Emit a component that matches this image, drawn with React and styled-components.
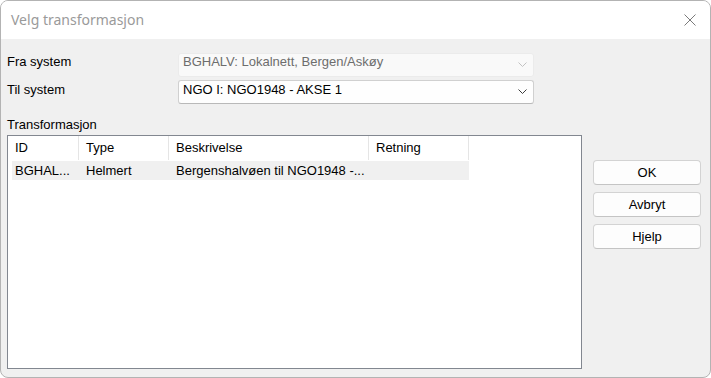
import React from 'react'
import styled, { createGlobalStyle } from 'styled-components'

const Global = createGlobalStyle`
	html, body {
		margin: 0;
		padding: 0;
		background: #ffffff;
	}
	body {
		font-family: "Liberation Sans", Arial, sans-serif;
		font-size: 13px;
		color: #000;
	}
`

const Window = styled.div`
	box-sizing: border-box;
	width: 711px;
	height: 378px;
	border: 1px solid #b3b3b3;
	border-radius: 8px;
	overflow: hidden;
	background: #f0f0f0;
	display: flex;
	flex-direction: column;
`

const TitleBar = styled.div`
	height: 38px;
	flex: none;
	background: #fff;
	display: flex;
	align-items: center;
	justify-content: space-between;
	padding-left: 10px;
`

const Title = styled.span`
	font-family: "Noto Sans", "Open Sans", sans-serif;
	font-size: 14px;
	color: #9a9a9a;
	margin-top: -1px;
`

const CloseButton = styled.div`
	width: 40px;
	height: 38px;
	display: grid;
	place-items: center;
`

const Body = styled.div`
	flex: 1;
	padding: 14px 0 0 6px;
`

const Form = styled.div`
	display: grid;
	grid-template-columns: 171px 356px;
	row-gap: 3px;
	align-items: start;
`

const Label = styled.div`
	line-height: 15px;
	padding-top: ${props => props.offset || 0}px;
	white-space: nowrap;
`

const Combo = styled.div`
	box-sizing: border-box;
	height: 24px;
	border-radius: 3px;
	border: 1px solid ${props => props.disabled ? '#ebebeb' : '#d0d0d0'};
	border-bottom-color: ${props => props.disabled ? '#ebebeb' : '#b9b9b9'};
	background: ${props => props.disabled ? '#f9f9f9' : '#fefefe'};
	color: ${props => props.disabled ? '#6d6d6d' : '#000'};
	display: flex;
	justify-content: space-between;
	padding: ${props => props.offset || 0}px 6px 0 4px;
	line-height: 15px;
`

const Chevron = styled.svg`
	align-self: center;
	margin-top: ${props => props.shift || 0}px;
`

const Lower = styled.div`
	display: flex;
	gap: 11px;
	margin-top: 13px;
`

const ListPane = styled.div`
	display: flex;
	flex-direction: column;
	gap: 3px;
`

const ListBox = styled.div`
	box-sizing: border-box;
	width: 575px;
	height: 234px;
	border: 1px solid #828790;
	background: #fff;
`

const HeaderRow = styled.div`
	display: flex;
	height: 24px;
`

const HeaderCell = styled.div`
	box-sizing: border-box;
	width: ${props => props.w}px;
	border-right: 1px solid #e5e5e5;
	padding-left: 7px;
	line-height: 24px;
	white-space: nowrap;
`

const DataRow = styled.div`
	display: flex;
	height: 19px;
	margin: 1px 0 0 4px;
	width: 457px;
	background: #f0f0f0;
`

const DataCell = styled.div`
	box-sizing: border-box;
	width: ${props => props.w}px;
	padding-left: ${props => props.pad}px;
	line-height: 19px;
	white-space: nowrap;
	overflow: hidden;
`

const Buttons = styled.div`
	display: flex;
	flex-direction: column;
	gap: 7px;
	padding-top: 43px;
`

const Button = styled.div`
	box-sizing: border-box;
	width: 108px;
	height: 25px;
	border: 1px solid #d3d3d3;
	border-bottom-color: #c4c4c4;
	border-radius: 4px;
	background: #fdfdfd;
	display: grid;
	place-items: center;
	line-height: 15px;
`

const columns = [
	{ title: 'ID', w: 71 },
	{ title: 'Type', w: 90 },
	{ title: 'Beskrivelse', w: 200 },
	{ title: 'Retning', w: 100 }
]

const row = [
	{ text: 'BGHAL...', w: 67, pad: 3 },
	{ text: 'Helmert', w: 90, pad: 7 },
	{ text: 'Bergenshalvøen til NGO1948 -...', w: 200, pad: 7 },
	{ text: '', w: 100, pad: 7 }
]

function ChevronIcon ({ color, shift }) {
	return (
		<Chevron width="9" height="5" viewBox="0 0 9 5" shift={shift}>
			<polyline points="0.5,0.5 4.5,4.5 8.5,0.5" fill="none" stroke={color} strokeWidth="1" />
		</Chevron>
	)
}

export default function App () {
	return (
		<Window>
			<Global />
			<TitleBar>
				<Title>Velg transformasjon</Title>
				<CloseButton>
					<svg width="12" height="12" viewBox="0 0 12 12">
						<path d="M0.5 0.5 L11.5 11.5 M11.5 0.5 L0.5 11.5" stroke="#7a7a7a" strokeWidth="1" fill="none" />
					</svg>
				</CloseButton>
			</TitleBar>
			<Body>
				<Form>
					<Label offset={1}>Fra system</Label>
					<Combo disabled offset={0}>
						<span>BGHALV: Lokalnett, Bergen/Askøy</span>
						<ChevronIcon color="#c2c2c2" shift={-2} />
					</Combo>
					<Label offset={2}>Til system</Label>
					<Combo offset={1}>
						<span>NGO I: NGO1948 - AKSE 1</span>
						<ChevronIcon color="#3c3c3c" shift={-2} />
					</Combo>
				</Form>
				<Lower>
					<ListPane>
						<Label>Transformasjon</Label>
						<ListBox>
							<HeaderRow>
								{columns.map(c => (
									<HeaderCell key={c.title} w={c.w}>{c.title}</HeaderCell>
								))}
							</HeaderRow>
							<DataRow>
								{row.map((c, i) => (
									<DataCell key={i} w={c.w} pad={c.pad}>{c.text}</DataCell>
								))}
							</DataRow>
						</ListBox>
					</ListPane>
					<Buttons>
						<Button>OK</Button>
						<Button>Avbryt</Button>
						<Button>Hjelp</Button>
					</Buttons>
				</Lower>
			</Body>
		</Window>
	)
}
